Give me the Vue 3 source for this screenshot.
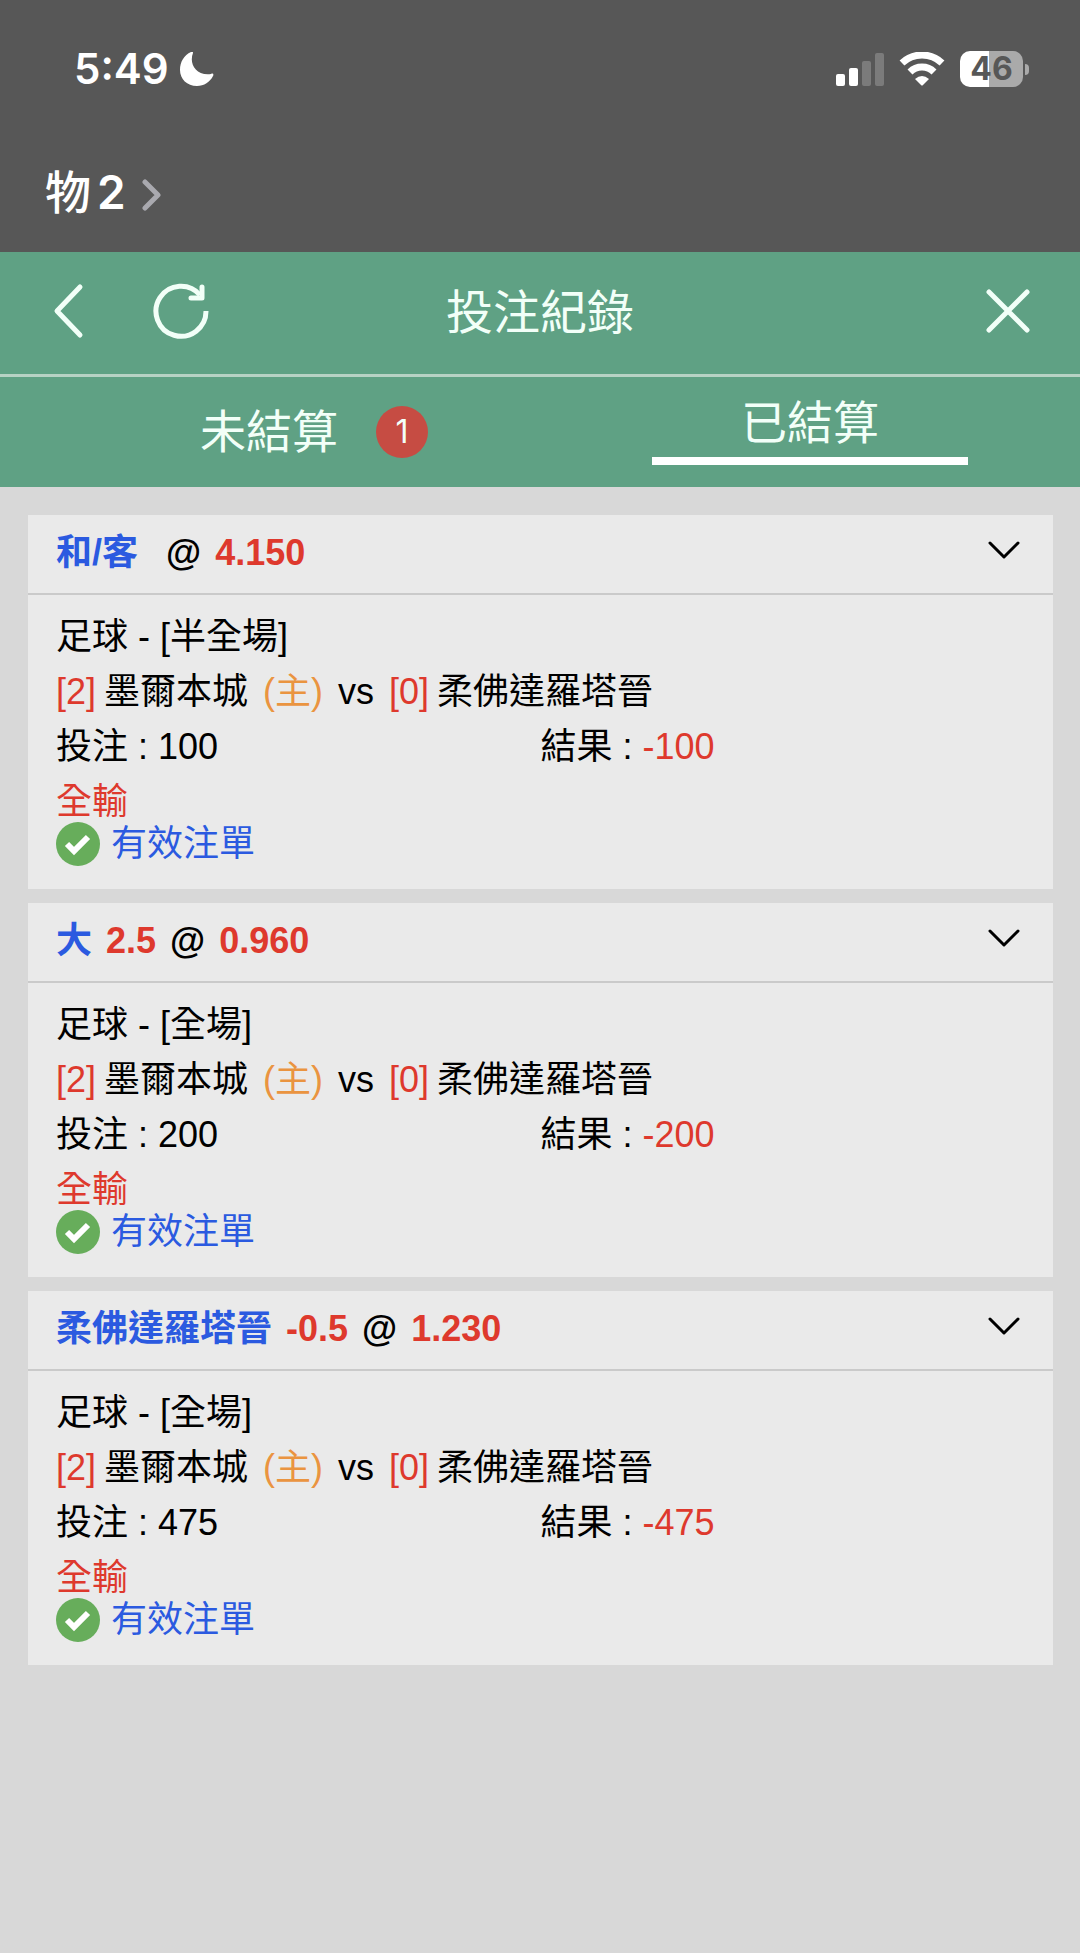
<script setup>
import { ref } from 'vue'

const tabs = [
  { id: 'open', label: '未結算', count: 1 },
  { id: 'settled', label: '已結算' },
]
const active = ref('settled')

const bets = [
  { pick: '和/客', line: '', odds: '4.150', market: '半全場', stake: 100, result: -100 },
  { pick: '大', line: '2.5', odds: '0.960', market: '全場', stake: 200, result: -200 },
  { pick: '柔佛達羅塔晉', line: '-0.5', odds: '1.230', market: '全場', stake: 475, result: -475 },
]
</script>

<template>
  <div class="app">
    <div class="system">
      <div class="status">
        <div class="clock">
          <span>5:49</span>
          <svg width="34" height="34" viewBox="0 0 34 34" aria-hidden="true">
            <path d="M13 1C9 11 15 24 31 22C33 21 34 22 33 24C30 30 24 34 17 34C7 34 0 27 0 18C0 10 4 3 11 0C13 -1 13 0 13 1Z" fill="#fff" />
          </svg>
        </div>
        <div class="indicators">
          <svg width="48" height="34" viewBox="0 0 48 34" aria-hidden="true">
            <rect x="0" y="22" width="9" height="12" rx="2" fill="#fff" />
            <rect x="13" y="16" width="9" height="18" rx="2" fill="#fff" />
            <rect x="26" y="9" width="9" height="25" rx="2" fill="#7b7b7b" />
            <rect x="39" y="1" width="9" height="33" rx="2" fill="#7b7b7b" />
          </svg>
          <svg width="46" height="34" viewBox="0 0 46 34" aria-hidden="true">
            <path d="M3 11A29 29 0 0 1 43 11" fill="none" stroke="#fff" stroke-width="7" />
            <path d="M11 20A17 17 0 0 1 35 20" fill="none" stroke="#fff" stroke-width="7" />
            <path d="M16 27Q23 21 30 27L24 33Q23 34 22 33Z" fill="#fff" />
          </svg>
          <div class="battery"><span class="level">46</span><i class="nub"></i></div>
        </div>
      </div>
      <button class="chat" type="button">
        <span class="name"><span class="han">物</span><span>2</span></span>
        <svg width="19" height="38" viewBox="0 0 19 38" aria-hidden="true">
          <path d="M3 9L16 22L3 35" fill="none" stroke="#a9a9af" stroke-width="5" stroke-linecap="round" stroke-linejoin="round" />
        </svg>
      </button>
    </div>

    <header class="bar">
      <div class="side">
        <button type="button" aria-label="返回">
          <svg width="32" height="58" viewBox="0 0 32 58">
            <path d="M27 5L4 29L27 53" fill="none" stroke="#f2fff8" stroke-width="5" stroke-linecap="round" stroke-linejoin="round" />
          </svg>
        </button>
        <button type="button" aria-label="重新整理">
          <svg width="56" height="58" viewBox="0 0 56 58">
            <path d="M53 29A25 25 0 1 1 47 13" fill="none" stroke="#f2fff8" stroke-width="5" />
            <path d="M49 5V16H38" fill="none" stroke="#f2fff8" stroke-width="5" stroke-linecap="round" stroke-linejoin="round" />
          </svg>
        </button>
      </div>
      <h1>投注紀錄</h1>
      <div class="side end">
        <button type="button" aria-label="關閉">
          <svg width="44" height="44" viewBox="0 0 44 44">
            <path d="M3 3L41 41M41 3L3 41" fill="none" stroke="#f2fff8" stroke-width="5" stroke-linecap="round" />
          </svg>
        </button>
      </div>
    </header>

    <nav class="tabs">
      <button v-for="t in tabs" :key="t.id" type="button" class="tab" :class="{ active: active === t.id }" @click="active = t.id">
        <span>{{ t.label }}</span>
        <span v-if="t.count" class="badge">{{ t.count }}</span>
      </button>
    </nav>

    <main class="list">
      <article v-for="b in bets" :key="b.pick" class="card">
        <div class="head">
          <h2>
            <span class="blue">{{ b.pick }}</span>
            <span class="red">{{ b.line }}</span>
            <span>@</span>
            <span class="red">{{ b.odds }}</span>
          </h2>
          <button type="button" class="toggle" aria-label="展開">
            <svg width="32" height="18" viewBox="0 0 32 18">
              <path d="M2 2L16 16L30 2" fill="none" stroke="#000" stroke-width="3" stroke-linecap="round" stroke-linejoin="round" />
            </svg>
          </button>
        </div>
        <div class="body">
          <p>足球 - [{{ b.market }}]</p>
          <p class="match">
            <span class="team"><span class="red">[2]</span><span>墨爾本城</span></span>
            <span class="orange">(主)</span>
            <span>vs</span>
            <span class="team"><span class="red">[0]</span><span>柔佛達羅塔晉</span></span>
          </p>
          <p class="sums">
            <span>投注 : {{ b.stake }}</span>
            <span>結果 : <span class="red">{{ b.result }}</span></span>
          </p>
          <p class="red">全輸</p>
          <p class="valid">
            <svg width="44" height="46" viewBox="1 0 44 46" aria-hidden="true">
              <circle cx="23" cy="23" r="22" fill="#67ad5b" />
              <path d="M12 23L19 30L33 16" fill="none" stroke="#fff" stroke-width="6" />
            </svg>
            <span>有效注單</span>
          </p>
        </div>
      </article>
    </main>
  </div>
</template>

<style>
body {
  margin: 0;
  background: #d8d8d8;
}
</style>

<style scoped>
.app {
  min-height: 100vh;
  background: #d8d8d8;
  color: #000;
  font-family: "Liberation Sans", "Noto Sans CJK TC", sans-serif;
  font-size: 36px;
}
button {
  margin: 0;
  padding: 0;
  border: 0;
  background: none;
  color: inherit;
  font: inherit;
}
svg {
  display: block;
  flex: none;
}
h1, h2, p {
  margin: 0;
}
.system {
  box-sizing: border-box;
  height: 252px;
  padding: 44px 51px 0 45px;
  background: #575757;
  color: #fff;
  font-family: Inter, "Noto Sans CJK TC", sans-serif;
  font-weight: 600;
}
.status {
  display: flex;
  justify-content: space-between;
  align-items: center;
  height: 50px;
  padding-left: 29px;
}
.clock {
  display: flex;
  align-items: center;
  gap: 11px;
  font-size: 42px;
  line-height: 50px;
}
.indicators {
  display: flex;
  align-items: center;
  gap: 15px;
}
.battery {
  display: flex;
  align-items: center;
  gap: 2px;
}
.level {
  width: 63px;
  border-radius: 10px;
  background: linear-gradient(90deg, #fff 46%, #aaa 46%);
  color: #575757;
  font-size: 32px;
  font-weight: 700;
  line-height: 36px;
  text-align: center;
}
.nub {
  width: 4px;
  height: 11px;
  border-radius: 0 4px 4px 0;
  background: #aaa;
}
.chat {
  display: flex;
  align-items: center;
  gap: 16px;
  margin-top: 66px;
  font-size: 46px;
  line-height: 64px;
}
.name {
  display: flex;
  gap: 6px;
}
.han {
  font-weight: 500;
}
.bar {
  display: grid;
  grid-template-columns: 1fr auto 1fr;
  align-items: center;
  height: 122px;
  padding: 0 50px;
  border-bottom: 3px solid #b7d2c4;
  background: #5fa184;
  color: #f2fff8;
}
.side {
  display: flex;
  align-items: center;
  gap: 68px;
  padding: 0 0 4px 3px;
}
.end {
  justify-content: flex-end;
}
h1 {
  font-size: 47px;
  font-weight: 400;
  line-height: 64px;
}
.tabs {
  display: grid;
  grid-template-columns: 1fr 1fr;
  height: 110px;
  background: #5fa184;
  color: #f2fff8;
  font-size: 46px;
  line-height: 64px;
}
.tab {
  display: flex;
  justify-content: center;
  align-items: center;
  gap: 38px;
}
.tab:first-child {
  padding-left: 88px;
}
.active {
  box-sizing: border-box;
  align-self: start;
  justify-self: center;
  width: 316px;
  height: 88px;
  padding-top: 12px;
  border-bottom: 8px solid #fff;
}
.badge {
  width: 52px;
  border-radius: 26px;
  background: #c64c43;
  font-family: Inter, sans-serif;
  font-size: 32px;
  line-height: 52px;
}
.list {
  display: flex;
  flex-direction: column;
  gap: 14px;
  padding: 28px 27px 28px 28px;
}
.card {
  background: #eaeaea;
}
.head {
  display: flex;
  justify-content: space-between;
  align-items: center;
  height: 78px;
  padding: 0 33px 0 28px;
  border-bottom: 2px solid #cacaca;
}
h2 {
  display: flex;
  gap: 14px;
  padding-bottom: 2px;
  font-size: 36px;
  line-height: 56px;
}
.toggle {
  padding-bottom: 8px;
}
.blue,
.valid {
  color: #2b5ae0;
}
.red {
  color: #de392d;
}
.orange {
  color: #ea9440;
}
.body {
  padding: 14px 28px 22px;
  line-height: 55px;
}
.match {
  display: flex;
  gap: 15px;
}
.team {
  display: flex;
  gap: 8px;
}
.sums {
  display: grid;
  grid-template-columns: 1fr 1fr;
}
.valid {
  display: flex;
  align-items: center;
  gap: 11px;
  margin-top: -8px;
  line-height: 46px;
}
</style>
